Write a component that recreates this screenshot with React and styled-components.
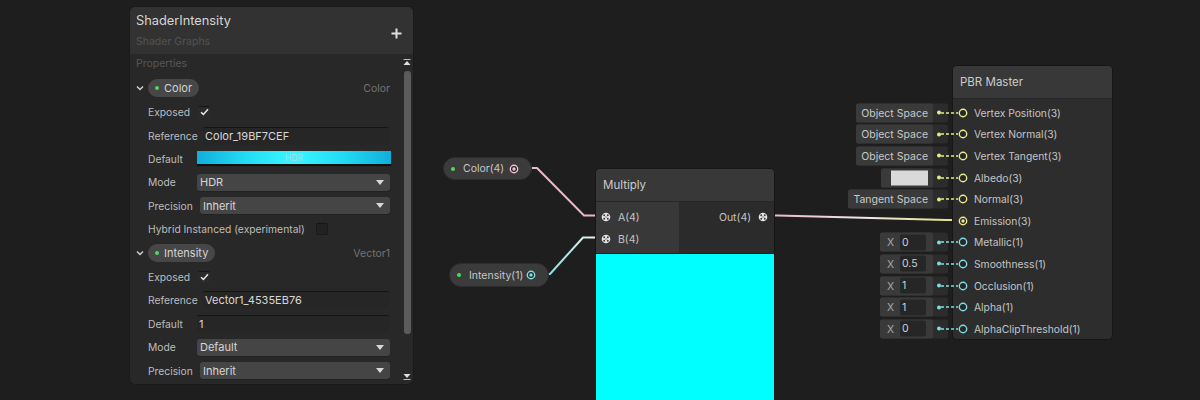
import React from "react";
import styled, { createGlobalStyle } from "styled-components";

const UI_FONT = `Inter, "Noto Sans", "Liberation Sans", sans-serif`;

const V1 = "#80dde3";
const V3 = "#e8ec8c";
const V4 = "#f0bfd6";

const GlobalStyle = createGlobalStyle`
  html, body { margin: 0; padding: 0; background: #1e1e1e; }
  #root { width: 1200px; height: 400px; }
`;

const Stage = styled.main`
  position: relative;
  width: 1200px;
  height: 400px;
  overflow: hidden;
  background: #1e1e1e;
  font-family: ${UI_FONT};
  color: #c4c4c4;
`;

/* ---------- wires ---------- */

const WireLayer = styled.svg`
  position: absolute;
  left: 0;
  top: 0;
  width: 1200px;
  height: 400px;
  pointer-events: none;
`;

/* ---------- blackboard ---------- */

const Board = styled.section`
  position: absolute;
  left: 130px;
  top: 7px;
  width: 283px;
  height: 377px;
  background: #282828;
  border-radius: 5px;
  overflow: hidden;
  display: flex;
  flex-direction: column;
  box-shadow: 0 0 0 1px #1a1a1a;
`;

const BoardHead = styled.header`
  flex: none;
  height: 47px;
  box-sizing: border-box;
  background: #323232;
  display: flex;
  justify-content: space-between;
  padding: 5px 11px 0 6px;
`;

const Title = styled.div`
  font-size: 12.8px;
  line-height: 18px;
  color: #d6d6d6;
`;

const Subtitle = styled.div`
  margin-top: 5px;
  font-size: 10.5px;
  line-height: 14px;
  color: #525252;
`;

const AddButton = styled.svg`
  align-self: center;
  width: 11px;
  height: 11px;
`;

const BoardBody = styled.div`
  flex: 1;
  display: flex;
  min-height: 0;
`;

const PropList = styled.div`
  flex: 1;
  min-width: 0;
  padding: 3px 11px 0 6px;
`;

const SectionLabel = styled.div`
  font-size: 10.5px;
  line-height: 14px;
  color: #575757;
  margin-bottom: 5px;
`;

const PropHeader = styled.div`
  height: 24.5px;
  display: flex;
  align-items: center;
`;

const Chevron = styled.svg`
  width: 8px;
  height: 6px;
  margin-right: 4px;
  flex: none;
`;

const Pill = styled.div`
  height: 18px;
  border-radius: 9px;
  background: #474747;
  display: flex;
  align-items: center;
  gap: 5px;
  padding: 0 7px 0 7px;
  font-size: 11px;
  color: #d4d4d4;
`;

const Dot = styled.span`
  width: 4px;
  height: 4px;
  border-radius: 50%;
  background: ${(p) => p.$color || "#4cdb5a"};
  flex: none;
`;

const TypeTag = styled.span`
  margin-left: auto;
  font-size: 10.5px;
  color: #737373;
`;

const FieldRow = styled.div`
  height: 23.4px;
  padding-left: 12px;
  display: grid;
  grid-template-columns: 49px minmax(0, 1fr);
  align-items: center;
`;

const FieldLabel = styled.span`
  font-size: 10.3px;
  color: #bcbcbc;
  white-space: nowrap;
`;

const FieldValue = styled.div`
  display: flex;
  align-items: center;
  min-width: 0;
  margin-left: ${(p) => p.$inset || 0}px;
  margin-right: ${(p) => p.$outset || 0}px;
`;

const FlagRow = styled.div`
  height: 23.4px;
  padding-left: 12px;
  display: flex;
  align-items: center;
  gap: 10px;
`;

const CheckBox = styled.span`
  width: 12px;
  height: 12px;
  box-sizing: border-box;
  border-radius: 2px;
  margin-left: 1px;
  display: grid;
  place-items: center;
  background: ${(p) => (p.$on ? "#2a2a2a" : "#222222")};
  border: 1px solid ${(p) => (p.$on ? "#2a2a2a" : "#1a1a1a")};
  border-top-color: #151515;
`;

const TextField = styled.div`
  flex: 1;
  height: 18px;
  box-sizing: border-box;
  border-radius: 2px;
  background: #262626;
  border-top: 1px solid #141414;
  padding-left: 2px;
  font-size: 11px;
  line-height: 17px;
  color: #d8d8d8;
  white-space: nowrap;
`;

const ColorBar = styled.div`
  flex: 1;
  height: 15px;
  box-sizing: border-box;
  border-bottom: 2px solid #0e0e0e;
  background: linear-gradient(90deg, #12aedb 0%, #22dcf4 25%, #3af6ff 50%, #22dcf4 75%, #12aedb 100%);
  display: grid;
  place-items: center;
  font-size: 8.5px;
  color: #a4dde8;
  letter-spacing: 0.2px;
`;

const Select = styled.div`
  flex: 1;
  height: 17px;
  box-sizing: border-box;
  border-radius: 3px;
  background: #454545;
  box-shadow: 0 1px 0 #222;
  display: flex;
  align-items: center;
  justify-content: space-between;
  padding: 0 6px 0 3px;
  font-size: 11px;
  color: #d6d6d6;
`;

const Caret = styled.svg`
  width: 8px;
  height: 5px;
`;

const ScrollRail = styled.div`
  flex: none;
  width: 12px;
  box-sizing: border-box;
  padding: 5px 0 4px;
  display: flex;
  flex-direction: column;
  align-items: center;
`;

const Track = styled.div`
  flex: 1;
  width: 7px;
  margin: 5px 0 4px;
`;

const Thumb = styled.div`
  height: 263px;
  border-radius: 3px;
  background: #5b5b5b;
`;

const RailArrow = styled.svg`
  width: 8px;
  height: 7px;
  flex: none;
`;

/* ---------- graph nodes ---------- */

const PropertyNode = styled.div`
  position: absolute;
  left: ${(p) => p.$x}px;
  top: ${(p) => p.$y}px;
  width: ${(p) => p.$w}px;
  height: ${(p) => p.$h}px;
  box-sizing: border-box;
  border-radius: 12px;
  background: #3b3b3b;
  border: 1px solid #2c2c2c;
  display: flex;
  align-items: center;
  padding: 0 12px 0 7px;
  font-size: 10.5px;
  color: #c6c6c6;
`;

const NodeText = styled.span`
  margin-left: 8px;
  white-space: nowrap;
`;

const PortGlyph = styled.svg`
  width: 10px;
  height: 10px;
  flex: none;
  margin-left: ${(p) => (p.$push ? "auto" : "0")};
`;

const GraphNode = styled.div`
  position: absolute;
  left: ${(p) => p.$x}px;
  top: ${(p) => p.$y}px;
  width: ${(p) => p.$w}px;
  height: ${(p) => p.$h}px;
  box-sizing: border-box;
  border: 1px solid #161616;
  border-radius: 5px;
  background: #2d2d2d;
  display: flex;
  flex-direction: column;
`;

const NodeTitle = styled.div`
  flex: none;
  height: 32px;
  border-radius: 4px 4px 0 0;
  background: #383838;
  border-bottom: 1px solid #262626;
  display: flex;
  align-items: center;
  padding-left: 7px;
  font-size: 11.5px;
  color: #cbcbcb;
`;

const PortArea = styled.div`
  flex: none;
  height: 51px;
  display: grid;
  grid-template-columns: 83px 1fr;
`;

const PortColumn = styled.div`
  padding-top: 4px;
  background: ${(p) => (p.$inputs ? "#383838" : "#2b2b2b")};
`;

const PortRow = styled.div`
  height: 22px;
  display: flex;
  align-items: center;
  gap: 7px;
  font-size: 10.5px;
  color: #c4c4c4;
  justify-content: ${(p) => (p.$out ? "flex-end" : "flex-start")};
  padding: ${(p) => (p.$out ? "0 6px 0 0" : "0 0 0 5px")};
`;

const Preview = styled.div`
  flex: 1;
  background: #00ffff;
  border-top: 1px solid #1c1c1c;
`;

const SlotList = styled.div`
  padding-top: 3px;
`;

const SlotRow = styled.div`
  position: relative;
  height: 21.6px;
  display: flex;
  align-items: center;
  gap: 6px;
  padding-left: 5px;
  font-size: 10.3px;
  color: #c4c4c4;
  white-space: nowrap;
`;

const InlineSlot = styled.div`
  position: absolute;
  right: calc(100% + 5px);
  top: 50%;
  transform: translateY(-50%);
  height: 19px;
  border-radius: 2px;
  background: #2c2c2c;
  display: flex;
  align-items: center;
  gap: 4px;
  padding-right: 7px;
`;

const Control = styled.div`
  height: 19px;
  box-sizing: border-box;
  border-radius: 2px;
  background: #3a3a3a;
  display: flex;
  align-items: center;
  gap: 6px;
  padding: ${(p) => p.$pad || "0 6px"};
  font-size: 10.5px;
  color: #c8c8c8;
`;

const Swatch = styled.span`
  width: 37px;
  height: 15px;
  background: #d9d9d9;
`;

const AxisLabel = styled.span`
  width: 7px;
  text-align: center;
  color: #a8a8a8;
`;

const NumberBox = styled.span`
  width: 26px;
  height: 16px;
  box-sizing: border-box;
  border-radius: 2px;
  background: #262626;
  padding-left: 2px;
  line-height: 16px;
  color: #d0d0d0;
`;

const Link = styled.svg`
  position: absolute;
  left: -12px;
  top: 50%;
  width: 17px;
  height: 2px;
  margin-top: -1px;
`;

/* ---------- small drawings ---------- */

function Port({ color, filled, push }) {
  return (
    <PortGlyph $push={push} viewBox="0 0 10 10">
      <circle cx="5" cy="5" r="3.7" fill="#262626" stroke={color} strokeWidth="1.4" />
      {filled && <circle cx="5" cy="5" r="1.7" fill={color} />}
    </PortGlyph>
  );
}

function DynamicPort() {
  return (
    <PortGlyph viewBox="0 0 10 10">
      <circle cx="5" cy="5" r="4.3" fill="#e4e4e4" />
      <circle cx="3.2" cy="3.2" r="0.95" fill="#3a3a3a" />
      <circle cx="6.8" cy="3.2" r="0.95" fill="#3a3a3a" />
      <circle cx="3.2" cy="6.8" r="0.95" fill="#3a3a3a" />
      <circle cx="6.8" cy="6.8" r="0.95" fill="#3a3a3a" />
      <circle cx="5" cy="5" r="0.7" fill="#5a5a5a" />
    </PortGlyph>
  );
}

function Check({ on }) {
  return (
    <CheckBox $on={on}>
      {on && (
        <svg width="9" height="8" viewBox="0 0 9 8">
          <polyline points="1,4.2 3.4,6.4 8,1.2" fill="none" stroke="#e6e6e6" strokeWidth="1.5" />
        </svg>
      )}
    </CheckBox>
  );
}

function Dropdown({ value }) {
  return (
    <Select>
      <span>{value}</span>
      <Caret viewBox="0 0 8 5">
        <polygon points="0,0 8,0 4,5" fill="#d8d8d8" />
      </Caret>
    </Select>
  );
}

function Field({ label, inset, outset, children }) {
  return (
    <FieldRow>
      <FieldLabel>{label}</FieldLabel>
      <FieldValue $inset={inset} $outset={outset}>
        {children}
      </FieldValue>
    </FieldRow>
  );
}

function PropertyHead({ name, type }) {
  return (
    <PropHeader>
      <Chevron viewBox="0 0 8 6">
        <polyline points="1,1.5 4,4.5 7,1.5" fill="none" stroke="#d0d0d0" strokeWidth="1.5" />
      </Chevron>
      <Pill>
        <Dot />
        {name}
      </Pill>
      <TypeTag>{type}</TypeTag>
    </PropHeader>
  );
}

function Blackboard() {
  return (
    <Board>
      <BoardHead>
        <div>
          <Title>ShaderIntensity</Title>
          <Subtitle>Shader Graphs</Subtitle>
        </div>
        <AddButton viewBox="0 0 11 11">
          <path d="M5.5 0.5v10M0.5 5.5h10" stroke="#dedede" strokeWidth="2" />
        </AddButton>
      </BoardHead>
      <BoardBody>
        <PropList>
          <SectionLabel>Properties</SectionLabel>

          <PropertyHead name="Color" type="Color" />
          <Field label="Exposed">
            <Check on />
          </Field>
          <Field label="Reference" inset={6} outset={1}>
            <TextField>Color_19BF7CEF</TextField>
          </Field>
          <Field label="Default" outset={-1}>
            <ColorBar>HDR</ColorBar>
          </Field>
          <Field label="Mode">
            <Dropdown value="HDR" />
          </Field>
          <Field label="Precision" inset={3}>
            <Dropdown value="Inherit" />
          </Field>
          <FlagRow>
            <FieldLabel>Hybrid Instanced (experimental)</FieldLabel>
            <Check />
          </FlagRow>

          <PropertyHead name="Intensity" type="Vector1" />
          <Field label="Exposed">
            <Check on />
          </Field>
          <Field label="Reference" inset={6} outset={1}>
            <TextField>Vector1_4535EB76</TextField>
          </Field>
          <Field label="Default" outset={1}>
            <TextField>1</TextField>
          </Field>
          <Field label="Mode">
            <Dropdown value="Default" />
          </Field>
          <Field label="Precision" inset={3}>
            <Dropdown value="Inherit" />
          </Field>
        </PropList>
        <ScrollRail>
          <RailArrow viewBox="0 0 8 7">
            <rect x="0.5" y="0" width="7" height="1" fill="#bdbdbd" />
            <polygon points="0.5,6 7.5,6 4,2" fill="#e0e0e0" />
          </RailArrow>
          <Track>
            <Thumb />
          </Track>
          <RailArrow viewBox="0 0 8 7">
            <polygon points="0.5,1 7.5,1 4,5" fill="#e0e0e0" />
            <rect x="0.5" y="6" width="7" height="1" fill="#bdbdbd" />
          </RailArrow>
        </ScrollRail>
      </BoardBody>
    </Board>
  );
}

/* master stack slots: label, port colour, inline control */
const masterSlots = [
  { label: "Vertex Position(3)", color: V3, input: { kind: "space", text: "Object Space" } },
  { label: "Vertex Normal(3)", color: V3, input: { kind: "space", text: "Object Space" } },
  { label: "Vertex Tangent(3)", color: V3, input: { kind: "space", text: "Object Space" } },
  { label: "Albedo(3)", color: V3, input: { kind: "swatch" } },
  { label: "Normal(3)", color: V3, input: { kind: "space", text: "Tangent Space" } },
  { label: "Emission(3)", color: V3, connected: true },
  { label: "Metallic(1)", color: V1, input: { kind: "number", value: "0" } },
  { label: "Smoothness(1)", color: V1, input: { kind: "number", value: "0.5" } },
  { label: "Occlusion(1)", color: V1, input: { kind: "number", value: "1" } },
  { label: "Alpha(1)", color: V1, input: { kind: "number", value: "1" } },
  { label: "AlphaClipThreshold(1)", color: V1, input: { kind: "number", value: "0" } },
];

function SlotInput({ input, color }) {
  let control;
  if (input.kind === "space") {
    control = <Control $pad="0 5px">{input.text}</Control>;
  } else if (input.kind === "swatch") {
    control = (
      <Control $pad="0 5px 0 10px">
        <Swatch />
      </Control>
    );
  } else {
    control = (
      <Control $pad="0 7px 0 7px">
        <AxisLabel>X</AxisLabel>
        <NumberBox>{input.value}</NumberBox>
      </Control>
    );
  }
  return (
    <>
      <InlineSlot>
        {control}
        <Dot $color={color} />
      </InlineSlot>
      <Link viewBox="0 0 17 2">
        <line x1="0" y1="1" x2="17" y2="1" stroke={color} strokeWidth="1.4" strokeDasharray="3 2" />
      </Link>
    </>
  );
}

export default function App() {
  return (
    <Stage>
      <GlobalStyle />

      <WireLayer viewBox="0 0 1200 400">
        <defs>
          <linearGradient id="wireIntensity" gradientUnits="userSpaceOnUse" x1="545" y1="0" x2="598" y2="0">
            <stop offset="0" stopColor={V1} />
            <stop offset="1" stopColor="#f2f2f2" />
          </linearGradient>
          <linearGradient id="wireEmission" gradientUnits="userSpaceOnUse" x1="770" y1="0" x2="958" y2="0">
            <stop offset="0" stopColor="#e9b6c8" />
            <stop offset="0.5" stopColor="#f1e6ec" />
            <stop offset="1" stopColor="#e2e277" />
          </linearGradient>
        </defs>
        <path d="M519 168 L537 168 L584 215.5 L602 215.5" fill="none" stroke="#eab8ca" strokeWidth="2" strokeLinejoin="round" />
        <path d="M536 275 L550 274 L583 237.5 L602 237.5" fill="none" stroke="url(#wireIntensity)" strokeWidth="2" strokeLinejoin="round" />
        <path d="M768 215.5 L778 215.5 L946 220 L958 220" fill="none" stroke="url(#wireEmission)" strokeWidth="2" strokeLinejoin="round" />
      </WireLayer>

      <Blackboard />

      <PropertyNode $x={443} $y={157} $w={89} $h={23}>
        <Dot />
        <NodeText>Color(4)</NodeText>
        <Port color={V4} filled push />
      </PropertyNode>

      <PropertyNode $x={449} $y={263} $w={100} $h={24}>
        <Dot />
        <NodeText>Intensity(1)</NodeText>
        <Port color={V1} filled push />
      </PropertyNode>

      <GraphNode $x={595} $y={168} $w={180} $h={245}>
        <NodeTitle>Multiply</NodeTitle>
        <PortArea>
          <PortColumn $inputs>
            <PortRow>
              <DynamicPort />
              A(4)
            </PortRow>
            <PortRow>
              <DynamicPort />
              B(4)
            </PortRow>
          </PortColumn>
          <PortColumn>
            <PortRow $out>
              Out(4)
              <DynamicPort />
            </PortRow>
          </PortColumn>
        </PortArea>
        <Preview />
      </GraphNode>

      <GraphNode $x={952} $y={65} $w={161} $h={275}>
        <NodeTitle>PBR Master</NodeTitle>
        <SlotList>
          {masterSlots.map((s) => (
            <SlotRow key={s.label}>
              {s.input && <SlotInput input={s.input} color={s.color} />}
              <Port color={s.color} filled={s.connected} />
              {s.label}
            </SlotRow>
          ))}
        </SlotList>
      </GraphNode>
    </Stage>
  );
}
